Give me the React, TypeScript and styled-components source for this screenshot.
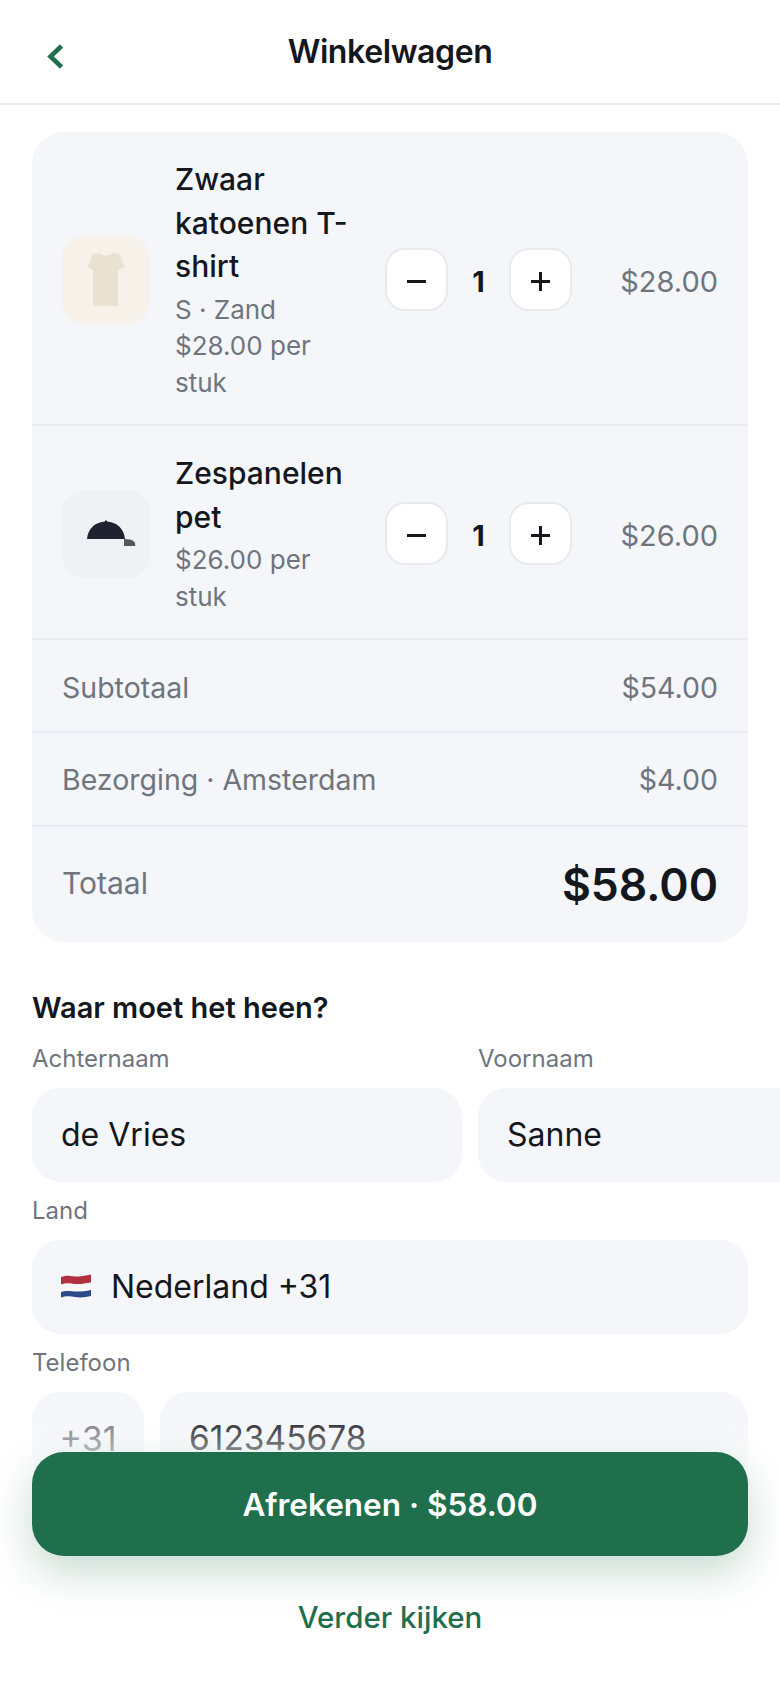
import styled, { createGlobalStyle } from 'styled-components';

const GlobalStyle = createGlobalStyle`
  * { box-sizing: border-box; }
  html, body { margin: 0; padding: 0; background: #fff; }
  body { font-family: "Inter", "Liberation Sans", sans-serif; color: #14171c; }
`

const Page = styled.div`
  position: relative;
  width: 780px;
  height: 1688px;
  overflow: hidden;
  background: #fff;
`
const Header = styled.header`
  height: 105px;
  display: flex;
  align-items: center;
  justify-content: center;
  position: relative;
  border-bottom: 2px solid #e8eaed;
`
const BackButton = styled.button`
  position: absolute;
  left: 44px;
  top: 40px;
  width: 24px;
  height: 32px;
  padding: 0;
  border: 0;
  background: none;
  display: flex;
`
const Title = styled.h1`
  margin: 0;
  font-size: 32px;
  font-weight: 600;
  letter-spacing: -0.4px;
`
const Content = styled.main`
  padding: 27px 32px 0;
`
const Card = styled.section`
  background: #f4f6fa;
  border-radius: 32px;
  overflow: hidden;
`
const Item = styled.div`
  display: flex;
  align-items: center;
  padding: 26px 30px 23px;
  border-bottom: 2px solid #e9ebf0;
`
const Thumb = styled.div<{ $bg: string }>`
  flex: none;
  width: 88px;
  height: 88px;
  border-radius: 22px;
  background: ${p => p.$bg};
  svg { display: block; }
`
const Info = styled.div`
  width: 186px;
  margin-left: 25px;
  margin-right: 24px;
`
const Name = styled.div`
  font-size: 30px;
  line-height: 43.5px;
  font-weight: 500;
  margin-bottom: 3px;
`
const Sub = styled.div`
  font-size: 26px;
  line-height: 36.5px;
  color: #6f757e;
`
const Stepper = styled.div`
  flex: none;
  display: flex;
  align-items: center;
`
const StepButton = styled.button`
  width: 63px;
  height: 63px;
  padding: 3px 0 0;
  border: 2px solid #e8eaee;
  border-radius: 20px;
  background: #fff;
  display: flex;
  align-items: center;
  justify-content: center;
`
const Count = styled.span`
  width: 61px;
  padding-top: 3px;
  text-align: center;
  font-size: 29px;
  font-weight: 700;
`
const Price = styled.div`
  flex: 1;
  padding-top: 3px;
  text-align: right;
  font-size: 29px;
  color: #6f757e;
`
const SummaryRow = styled.div<{ $height: number }>`
  height: ${p => p.$height}px;
  padding: 0 30px;
  display: flex;
  align-items: center;
  justify-content: space-between;
  font-size: 28.500px;
  color: #6f757e;
  & + & { border-top: 2px solid #e9ebf0; }
`
const SubtotalRow = styled(SummaryRow)`
  padding-top: 4px;
`
const TotalLabel = styled.span`
  font-size: 30px;
  margin-bottom: 3px;
`
const TotalValue = styled.span`
  font-size: 44.500px;
  font-weight: 600;
  color: #14171c;
`
const FormTitle = styled.h2`
  margin: 48px 0 0;
  font-size: 29px;
  line-height: 36px;
  font-weight: 600;
`
const Label = styled.div`
  margin-top: 12px;
  font-size: 24px;
  line-height: 34px;
  color: #6f757e;
`
const NameGrid = styled.div`
  display: grid;
  grid-template-columns: 430px 430px;
  column-gap: 16px;
  margin-top: 4px;
`
const Field = styled.div`
  height: 94px;
  margin-top: 12px;
  padding: 0 29px 2px;
  border-radius: 28px;
  background: #f4f6fa;
  display: flex;
  align-items: center;
  gap: 20px;
  font-size: 32px;
  color: #14171c;
  svg { flex: none; }
`
const PrefixField = styled(Field)`
  padding: 0 0 2px;
  justify-content: center;
  font-size: 34px;
  color: #6f757e;
`
const PhoneField = styled(Field)`
  font-size: 33.500px;
`
const PhoneRow = styled.div`
  display: grid;
  grid-template-columns: 112px 1fr;
  column-gap: 16px;
`
const Footer = styled.footer`
  position: absolute;
  left: 0;
  right: 0;
  bottom: 0;
  padding: 40px 32px 0;
  height: 276px;
  background: linear-gradient(rgba(255, 255, 255, 0), #fff 80px);
`
const CheckoutButton = styled.button`
  width: 100%;
  height: 104px;
  border: 0;
  border-radius: 32px;
  background: #1f6f4d;
  color: #fff;
  font-family: inherit;
  font-size: 31.500px;
  font-weight: 600;
  box-shadow: 0 16px 40px rgba(31, 111, 77, 0.25);
`
const BrowseLink = styled.a`
  display: block;
  margin-top: 41px;
  text-align: center;
  font-size: 29.500px;
  line-height: 40px;
  font-weight: 500;
  color: #1f6f4d;
`

const Back = () => (
  <svg width="24" height="32" viewBox="0 0 24 32" fill="none">
    <path d="M17.500 6 L6.500 16.500 L17.500 27" stroke="#1f6f4d" strokeWidth="4.500" />
  </svg>
)

const Minus = () => (
  <svg width="19" height="19" viewBox="0 0 19 19">
    <path d="M0 9.500 H19" stroke="#14171c" strokeWidth="3" />
  </svg>
)

const Plus = () => (
  <svg width="19" height="19" viewBox="0 0 19 19">
    <path d="M0 9.500 H19 M9.500 0 V19" stroke="#14171c" strokeWidth="3" />
  </svg>
)

const Tee = () => (
  <svg width="88" height="88" viewBox="0 0 88 88">
    <path d="M31 18 L37 17 Q44 22 51 17 L57 18 L63 31 L56 34 V70 H31 V34 L25 31 Z" fill="#e9e2d3" />
  </svg>
)

const Cap = () => (
  <svg width="88" height="88" viewBox="0 0 88 88">
    <path d="M25 49 C26 38 34 32 43 31.500 L43 30.500 H45 L45 31.500 C54 32 62 38 63 49 Z" fill="#1f2330" />
    <path d="M62 49 L68 49.500 C72 50.500 74 53 73 56 H62 Z" fill="#55575c" />
  </svg>
)

const Flag = () => (
  <svg width="30" height="24" viewBox="0 0 30 24">
    <path d="M0 3 C8 0 12 3 18 2.500 C23 2 27 1 30 0.500 V8.500 C25 9.500 21 10 16 10 C10 10 5 8.500 0 10.500 Z" fill="#b3303f" />
    <path d="M0 10.500 C5 8.500 10 10 16 10 C21 10 25 9.500 30 8.500 V16 C25 17 21 17.500 16 17.500 C10 17.500 5 16 0 18 Z" fill="#f7f7f7" />
    <path d="M0 18 C5 16 10 17.500 16 17.500 C21 17.500 25 17 30 16 V22 C25 23 20 24 14 23 C9 22 4 22 0 23.500 Z" fill="#2a4a8c" />
  </svg>
)

const QtyStepper = () => (
  <Stepper>
    <StepButton aria-label="Minder"><Minus /></StepButton>
    <Count>1</Count>
    <StepButton aria-label="Meer"><Plus /></StepButton>
  </Stepper>
)

const App = () => {
  return (
    <Page>
      <GlobalStyle />
      <Header>
        <BackButton><Back /></BackButton>
        <Title>Winkelwagen</Title>
      </Header>
      <Content>
        <Card>
          <Item>
            <Thumb $bg="#f6f2ea"><Tee /></Thumb>
            <Info>
              <Name>Zwaar katoenen T-shirt</Name>
              <Sub>S · Zand</Sub>
              <Sub>$28.00 per stuk</Sub>
            </Info>
            <QtyStepper />
            <Price>$28.00</Price>
          </Item>
          <Item>
            <Thumb $bg="#f0f1f5"><Cap /></Thumb>
            <Info>
              <Name>Zespanelen pet</Name>
              <Sub>$26.00 per stuk</Sub>
            </Info>
            <QtyStepper />
            <Price>$26.00</Price>
          </Item>
          <SubtotalRow $height={91}><span>Subtotaal</span><span>$54.00</span></SubtotalRow>
          <SummaryRow $height={94}><span>Bezorging · Amsterdam</span><span>$4.00</span></SummaryRow>
          <SummaryRow $height={117}><TotalLabel>Totaal</TotalLabel><TotalValue>$58.00</TotalValue></SummaryRow>
        </Card>
        <FormTitle>Waar moet het heen?</FormTitle>
        <NameGrid>
          <div>
            <Label>Achternaam</Label>
            <Field>de Vries</Field>
          </div>
          <div>
            <Label>Voornaam</Label>
            <Field>Sanne</Field>
          </div>
        </NameGrid>
        <Label>Land</Label>
        <Field><Flag />Nederland +31</Field>
        <Label>Telefoon</Label>
        <PhoneRow>
          <PrefixField>+31</PrefixField>
          <PhoneField>612345678</PhoneField>
        </PhoneRow>
      </Content>
      <Footer>
        <CheckoutButton>Afrekenen · $58.00</CheckoutButton>
        <BrowseLink>Verder kijken</BrowseLink>
      </Footer>
    </Page>
  )
}

export default App
